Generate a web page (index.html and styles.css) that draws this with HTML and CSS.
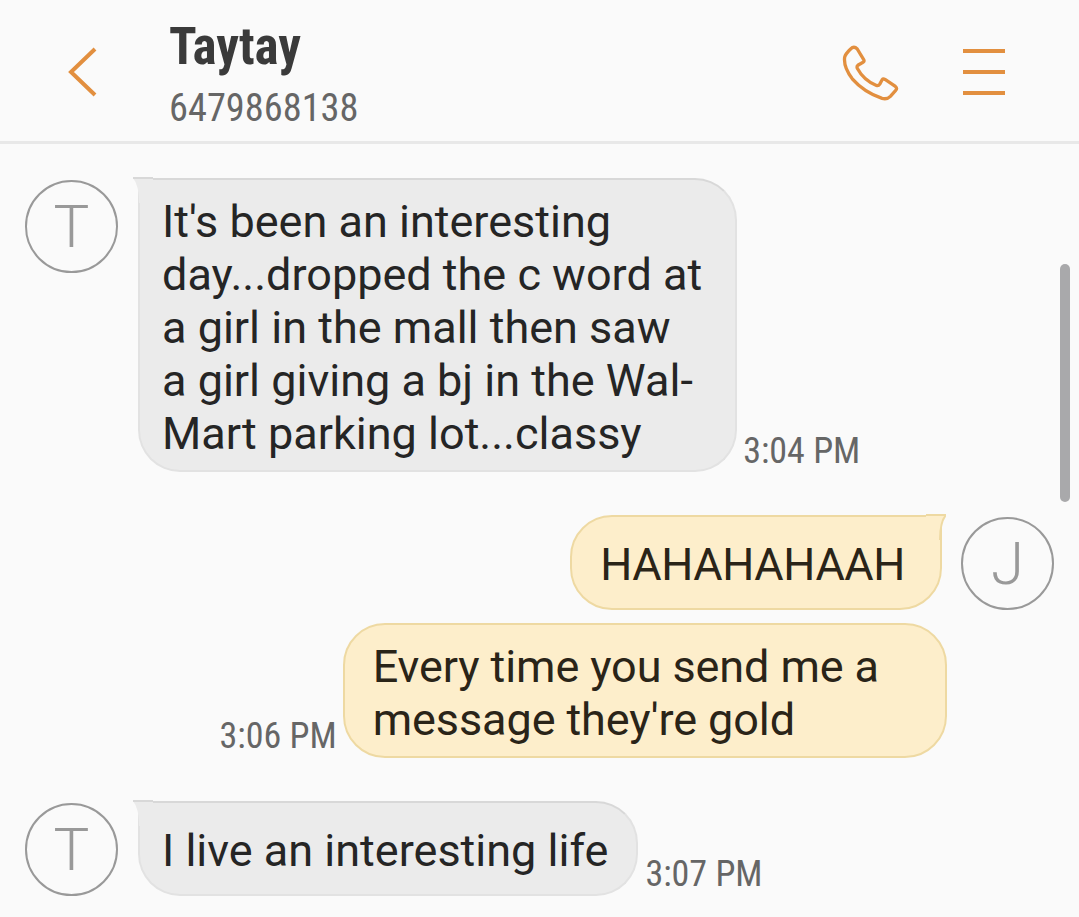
FILE: index.html
```html
<!DOCTYPE html>
<html>
<head>
    <title>Taytay</title>
    <link rel="stylesheet" href="styles.css">
</head>
<body>
    <div class="header">
        <svg class="back" viewBox="0 0 30 50"><polyline points="27,2 3,25 27,48"/></svg>
        <div class="contact">
            <div class="name">Taytay</div>
            <div class="number">6479868138</div>
        </div>
        <svg class="phone" viewBox="125 70 170 172"><path d="M150 85Q160 75 170 85L190 118Q192 124 186 126L172 134Q168 137 170 143Q190 180 228 195Q234 197 238 191L245 178Q248 174 254 177L285 198Q292 204 286 210L270 228Q260 238 245 234Q190 215 155 175Q128 140 132 110Q134 100 150 85Z"/></svg>
        <div class="menu"><span></span><span></span><span></span></div>
    </div>

    <div class="scrollbar"></div>

    <div class="messages">
        <div class="row row-first">
            <div class="avatar">T</div>
            <div class="bubble in">
                <svg class="tail" viewBox="0 0 20 26"><path class="tail-fill" d="M0 1H20V26H6Q6 8 0 1Z"/><path class="tail-line" d="M20 1H0"/></svg>
                It's been an interesting<br>day...dropped the c word at<br>a girl in the mall then saw<br>a girl giving a bj in the Wal-<br>Mart parking lot...classy
            </div>
            <div class="time">3:04 PM</div>
        </div>

        <div class="row out row-second">
            <div class="bubble mine">
                <svg class="tail-right" viewBox="0 0 20 26"><path class="tail-fill" d="M20 1H0V26H14Q14 8 20 1Z"/><path class="tail-line" d="M0 1H20Q14 8 14 26"/></svg>
                HAHAHAHAAH
            </div>
            <div class="avatar">J</div>
        </div>

        <div class="row out row-third">
            <div class="time">3:06 PM</div>
            <div class="bubble mine">Every time you send me a<br>message they're gold</div>
        </div>

        <div class="row row-last">
            <div class="avatar">T</div>
            <div class="bubble in">
                <svg class="tail" viewBox="0 0 20 26"><path class="tail-fill" d="M0 1H20V26H6Q6 8 0 1Z"/><path class="tail-line" d="M20 1H0"/></svg>
                I live an interesting life
            </div>
            <div class="time">3:07 PM</div>
        </div>
    </div>
</body>
</html>
```
FILE: styles.css
```css
html, body {
    margin: 0;
    height: 917px;
    overflow: hidden;
    background: #fafafa;
    font-family: Roboto, "Liberation Sans", sans-serif;
}
.header {
    display: flex;
    align-items: center;
    height: 138px;
    padding-top: 3px;
    border-bottom: 3px solid #e8e8e8;
    padding-left: 68px;
}
.back {
    width: 30px;
    height: 50px;
    margin-right: 71px;
    fill: none;
    stroke: #e28f3f;
    stroke-width: 4;
}
.contact {
    flex: 1;
    align-self: flex-start;
    padding-top: 15px;
}
.name {
    font-size: 51px;
    font-weight: 700;
    line-height: 58px;
    color: #3a3a3a;
    font-stretch: condensed;
}
.number {
    margin-top: 9px;
    font-size: 38.4px;
    line-height: 46px;
    color: #666;
    font-stretch: condensed;
}
.phone {
    width: 57px;
    height: 57px;
    margin-right: 64px;
    fill: none;
    stroke: #e28f3f;
    stroke-width: 10;
}
.menu {
    display: flex;
    flex-direction: column;
    gap: 17px;
    width: 42px;
    margin-right: 74px;
}
.menu span {
    height: 4px;
    background: #e28f3f;
}
.scrollbar {
    position: absolute;
    left: 1060px;
    top: 264px;
    width: 10px;
    height: 238px;
    border-radius: 5px;
    background: #a9a9ab;
}
.messages {
    padding: 34px 25px 0 25px;
}
.row {
    display: flex;
    align-items: flex-start;
}
.out {
    justify-content: flex-end;
}
.row-second {
    margin-top: 43px;
}
.row-third {
    margin-top: 13px;
    padding-right: 107px;
}
.row-last {
    margin-top: 43px;
}
.avatar {
    flex: none;
    width: 93px;
    height: 93px;
    margin-top: 2px;
    box-sizing: border-box;
    border: 2px solid #999;
    border-radius: 50%;
    display: flex;
    align-items: center;
    justify-content: center;
    font-size: 60px;
    font-weight: 300;
    color: #999;
}
.bubble {
    position: relative;
    padding: 15px 33px 10px 22px;
    font-size: 45px;
    line-height: 53px;
    color: #252525;
    border-radius: 42px;
    white-space: nowrap;
}
.row-second .bubble,
.row-last .bubble {
    padding-top: 20.5px;
    padding-bottom: 17.5px;
}
.row-last .bubble {
    padding-right: 28px;
}
.in {
    margin-left: 20px;
    background: #ebebeb;
    border: 2px solid #e2e2e2;
    border-top-color: #d8d8d8;
    border-top-left-radius: 0;
}
.mine {
    background: #fdeecb;
    border: 2px solid #eed9a2;
    padding-left: 28px;
    color: #2a2418;
}
.row-third .mine {
    padding-right: 66px;
    letter-spacing: -0.1px;
}
.row-second .mine {
    margin-right: 19px;
    padding-right: 35px;
    letter-spacing: -0.4px;
    border-top-right-radius: 0;
}
.tail,
.tail-right {
    position: absolute;
    top: -3px;
    width: 20px;
    height: 26px;
}
.tail {
    left: -7px;
}
.tail-right {
    right: -6px;
}
.tail-line {
    fill: none;
    stroke-width: 2;
}
.in .tail-fill {
    fill: #ebebeb;
}
.in .tail-line {
    stroke: #d8d8d8;
}
.mine .tail-fill {
    fill: #fdeecb;
}
.mine .tail-line {
    stroke: #eed9a2;
}
.time {
    align-self: flex-end;
    margin: 0 6px 2px 7px;
    font-size: 36px;
    line-height: 40px;
    color: #666;
    font-stretch: condensed;
}
.row-first .time {
    margin-left: 6px;
    margin-bottom: 1px;
}
```
